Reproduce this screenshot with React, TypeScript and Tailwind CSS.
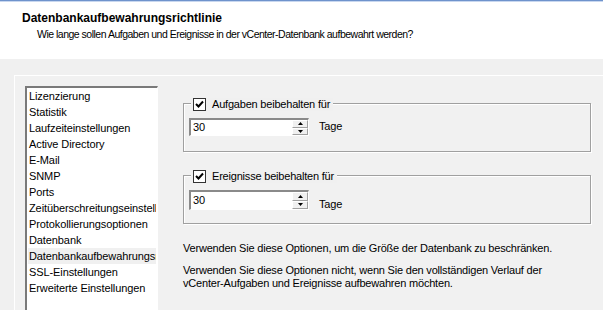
import React from "react";

const items = [
  "Lizenzierung",
  "Statistik",
  "Laufzeiteinstellungen",
  "Active Directory",
  "E-Mail",
  "SNMP",
  "Ports",
  "Zeitüberschreitungseinstellungen",
  "Protokollierungsoptionen",
  "Datenbank",
  "Datenbankaufbewahrungsrichtlinie",
  "SSL-Einstellungen",
  "Erweiterte Einstellungen",
];

function CheckBox() {
  return (
    <div className="w-[13px] h-[13px] border border-[#333333] bg-white flex items-center justify-center">
      <svg width="9" height="9" viewBox="0 0 9 9">
        <path d="M1 4 L3.5 6.5 L8 1.5" stroke="#000" strokeWidth="2" fill="none" />
      </svg>
    </div>
  );
}

function SpinBox({ value, height }: { value: string; height: string }) {
  return (
    <div className={`w-[120px] ${height} flex bg-white border-t-2 border-l-2 border-t-[#8a8a8a] border-l-[#8a8a8a] border-r border-b border-r-white border-b-white`}>
      <div className="flex-1 pl-[2px] flex items-center leading-none">{value}</div>
      <div className="w-[16px] flex flex-col bg-[#f0f0f0]">
        <div className="flex-1 flex items-center justify-center border border-t-white border-l-white border-r-[#a0a0a0] border-b-[#a0a0a0]">
          <svg width="5" height="3" viewBox="0 0 5 3"><path d="M2.5 0 L5 3 L0 3 Z" fill="#000" /></svg>
        </div>
        <div className="flex-1 flex items-center justify-center border border-t-white border-l-white border-r-[#a0a0a0] border-b-[#a0a0a0]">
          <svg width="5" height="3" viewBox="0 0 5 3"><path d="M0 0 L5 0 L2.5 3 Z" fill="#000" /></svg>
        </div>
      </div>
    </div>
  );
}

function Group({ label, boxH, tageMt }: { label: string; boxH: string; tageMt: string }) {
  return (
    <div className="relative h-[49px] shrink-0 border border-[#a0a0a0] shadow-[inset_1px_1px_0_#ffffff,1px_1px_0_#ffffff] pl-[5px] pt-[14px]">
      <div className="absolute left-[7px] top-[-6px] bg-[#f0f0f0] pl-[2px] pr-[3px] flex items-center gap-[6px]">
        <CheckBox />
        <span>{label}</span>
      </div>
      <div className="flex items-start gap-[10px]">
        <SpinBox value="30" height={boxH} />
        <span className={tageMt}>Tage</span>
      </div>
    </div>
  );
}

export default function App() {
  return (
    <div
      className="w-[603px] h-[310px] overflow-hidden flex flex-col bg-[#f0f0f0] text-[11px] text-black leading-[13px]"
      style={{ fontFamily: "'Liberation Sans', Arial, sans-serif" }}
    >
      <div className="h-[1px] shrink-0 bg-[#6f93cc]" />
      <div className="h-[1px] shrink-0 bg-[#c8d7ef]" />
      {/* header */}
      <div className="h-[57px] shrink-0 bg-white pl-[22px] pt-[10px]">
        <div className="font-bold text-[12px]">Datenbankaufbewahrungsrichtlinie</div>
        <div className="pl-[15px] mt-[3px] text-[10.5px] tracking-[-0.5px]">
          Wie lange sollen Aufgaben und Ereignisse in der vCenter-Datenbank aufbewahrt werden?
        </div>
      </div>
      {/* body */}
      <div className="flex-1 min-h-0 overflow-hidden pl-[14px] pt-[16px]">
        <div className="h-[260px] border-t border-l border-white bg-[#f1f1f1] pl-[10px] pt-[10px] flex">
          {/* list */}
          <div className="w-[133px] h-[240px] shrink-0 bg-white border-t-2 border-l-2 border-t-[#7a7a7a] border-l-[#7a7a7a] border-r border-r-white pl-[1px] pr-[1px] tracking-[-0.1px]">
            {items.map((item, i) => (
              <div
                key={item}
                className={`h-[16px] leading-[16px] pl-[1px] whitespace-nowrap overflow-hidden ${i === 10 ? "bg-[#f0f0f0]" : ""}`}
              >
                {item}
              </div>
            ))}
          </div>
          {/* options */}
          <div className="flex-1 pl-[25px] pr-[12px] pt-[17px] flex flex-col tracking-[-0.2px]">
            <Group label="Aufgaben beibehalten für" boxH="h-[18px]" tageMt="mt-[2px]" />
            <div className="h-[23px] shrink-0" />
            <Group label="Ereignisse beibehalten für" boxH="h-[20px]" tageMt="mt-[8px]" />
            <div className="mt-[18px]">Verwenden Sie diese Optionen, um die Größe der Datenbank zu beschränken.</div>
            <div className="mt-[9px]">
              Verwenden Sie diese Optionen nicht, wenn Sie den vollständigen Verlauf der
              <br />
              vCenter-Aufgaben und Ereignisse aufbewahren möchten.
            </div>
          </div>
        </div>
      </div>
    </div>
  );
}
